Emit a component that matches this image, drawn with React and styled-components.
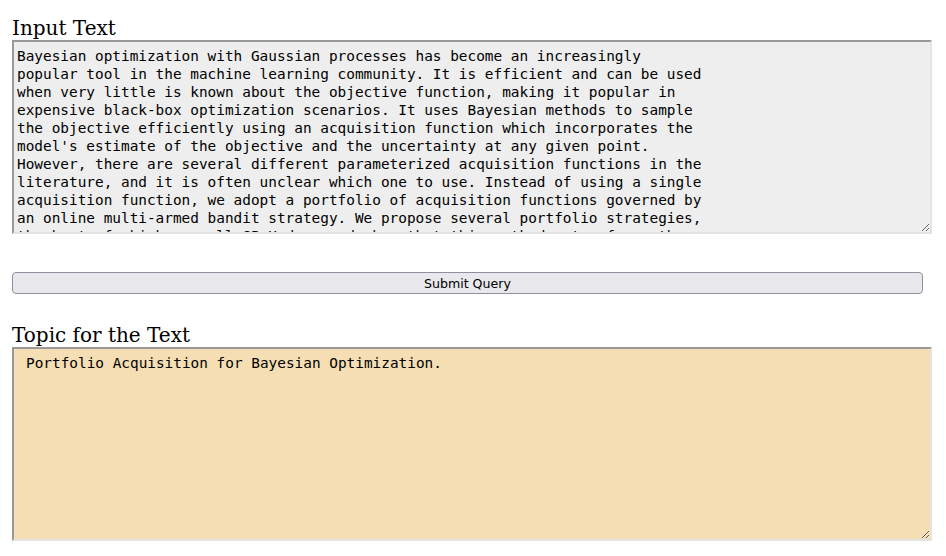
import React from 'react';
import styled, { createGlobalStyle } from 'styled-components';

const GlobalStyle = createGlobalStyle`
  body {
    margin: 0;
    background: #ffffff;
    font-family: "DejaVu Serif", serif;
  }
`;

const abstract = `Bayesian optimization with Gaussian processes has become an increasingly
popular tool in the machine learning community. It is efficient and can be used
when very little is known about the objective function, making it popular in
expensive black-box optimization scenarios. It uses Bayesian methods to sample
the objective efficiently using an acquisition function which incorporates the
model's estimate of the objective and the uncertainty at any given point.
However, there are several different parameterized acquisition functions in the
literature, and it is often unclear which one to use. Instead of using a single
acquisition function, we adopt a portfolio of acquisition functions governed by
an online multi-armed bandit strategy. We propose several portfolio strategies,
the best of which we call GP-Hedge, and show that this method outperforms the
best individual acquisition function. We also provide a theoretical bound on
the algorithm's performance.`;

const App = () => {
  return (
    <>
      <GlobalStyle />
      <Page>
        <Section>
          <Heading>Input Text</Heading>
          <TextBox variant="input" defaultValue={abstract} />
        </Section>
        <SubmitButton type="submit">Submit Query</SubmitButton>
        <Section>
          <Heading>Topic for the Text</Heading>
          <TextBox variant="topic" defaultValue="Portfolio Acquisition for Bayesian Optimization." />
        </Section>
      </Page>
    </>
  );
};

export default App;

const Page = styled.div`
  padding: 17px 14px 15px 12px;
  display: flex;
  flex-direction: column;
`;

const Section = styled.div`
  display: flex;
  flex-direction: column;
`;

const Heading = styled.div`
  font-family: "DejaVu Serif", serif;
  font-size: 20px;
  line-height: 23px;
  color: #000000;
`;

const TextBox = styled.textarea`
  display: block;
  box-sizing: border-box;
  width: 100%;
  height: 194px;
  margin: 0;
  border-width: 2px;
  border-style: solid;
  border-color: #999999 #e3e3e3 #e3e3e3 #999999;
  font-family: "DejaVu Sans Mono", monospace;
  font-size: 14.4px;
  line-height: 18px;
  color: #000000;
  background: ${(p) => (p.variant === 'topic' ? '#f5deb3' : '#eeeeee')};
  padding: ${(p) => (p.variant === 'topic' ? '5px 12px' : '5px 3px')};
  overflow: hidden;
  white-space: pre;
  resize: both;
  outline: none;
`;

const SubmitButton = styled.button`
  width: 99%;
  height: 22px;
  margin: 38px 0 30px;
  padding: 0;
  box-sizing: border-box;
  border: 1px solid #8f8f9d;
  border-radius: 4px;
  background: #e9e9ed;
  color: #000000;
  font-family: "DejaVu Sans", sans-serif;
  font-size: 12.6px;
  cursor: pointer;
`;
